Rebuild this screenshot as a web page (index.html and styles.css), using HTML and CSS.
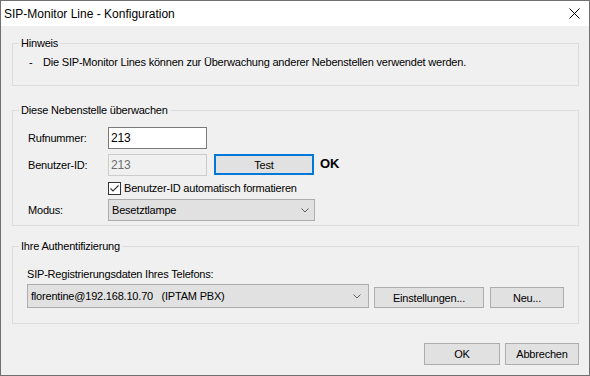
FILE: index.html
```html
<!DOCTYPE html>
<html lang="de">
<head>
<meta charset="utf-8">
<title>SIP-Monitor Line - Konfiguration</title>
<link rel="stylesheet" href="styles.css">
</head>
<body>
<div class="window">
  <div class="titlebar">
    <span class="title">SIP-Monitor Line - Konfiguration</span>
    <svg class="close" width="11" height="11" viewBox="0 0 11 11"><path d="M0.5 0.5 L10.5 10.5 M10.5 0.5 L0.5 10.5" stroke="#000" stroke-width="1" fill="none"/></svg>
  </div>
  <div class="body">
    <fieldset class="group g1">
      <legend>Hinweis</legend>
      <div class="note"><span class="dash">-</span><span>Die SIP-Monitor Lines können zur Überwachung anderer Nebenstellen verwendet werden.</span></div>
    </fieldset>

    <fieldset class="group g2">
      <legend>Diese Nebenstelle überwachen</legend>
      <div class="content">
        <div class="row">
          <span class="lbl">Rufnummer:</span>
          <div class="textbox">213</div>
        </div>
        <div class="row r2">
          <span class="lbl">Benutzer-ID:</span>
          <div class="textbox disabled">213</div>
          <div class="btn btn-test">Test</div>
          <span class="status">OK</span>
        </div>
        <div class="row r3">
          <span class="cb"><svg width="11" height="11" viewBox="0 0 11 11"><path d="M1.5 5.5 L4 8 L9.5 2.5" stroke="#333" stroke-width="1.1" fill="none"/></svg></span>
          <span class="cb-label">Benutzer-ID automatisch formatieren</span>
        </div>
        <div class="row r4">
          <span class="lbl">Modus:</span>
          <div class="combo combo-mode"><span>Besetztlampe</span><svg class="chev" width="8" height="5" viewBox="0 0 8 5"><path d="M0.5 0.5 L4 4 L7.5 0.5" stroke="#606060" stroke-width="1" fill="none"/></svg></div>
        </div>
      </div>
    </fieldset>

    <fieldset class="group g3">
      <legend>Ihre Authentifizierung</legend>
      <div class="content">
        <div class="sub">SIP-Registrierungsdaten Ihres Telefons:</div>
        <div class="row auth">
          <div class="combo combo-auth"><span>florentine@192.168.10.70&nbsp;&nbsp; (IPTAM PBX)</span><svg class="chev" width="8" height="5" viewBox="0 0 8 5"><path d="M0.5 0.5 L4 4 L7.5 0.5" stroke="#606060" stroke-width="1" fill="none"/></svg></div>
          <div class="btn btn-set">Einstellungen...</div>
          <div class="btn btn-new">Neu...</div>
        </div>
      </div>
    </fieldset>

    <div class="footer">
      <div class="btn btn-ok">OK</div>
      <div class="btn btn-cancel">Abbrechen</div>
    </div>
  </div>
</div>
</body>
</html>
```

FILE: styles.css
```css
* { box-sizing: border-box; }

body {
  margin: 0;
  font-family: "Liberation Sans", Arial, sans-serif;
  font-size: 11px;
  letter-spacing: -0.2px;
  color: #000;
  background: #fff;
}

.window {
  width: 590px;
  height: 376px;
  border: 1px solid #707070;
  background: #f0f0f0;
  display: flex;
  flex-direction: column;
}

.titlebar {
  height: 25px;
  flex: none;
  background: #fff;
  display: flex;
  align-items: center;
  justify-content: space-between;
  padding: 0 9px 0 3px;
}

.title {
  font-size: 12px;
  letter-spacing: 0;
  line-height: 16px;
}

.close { display: block; }

.body {
  flex: 1;
  padding: 9px 10px 11px 11px;
  display: flex;
  flex-direction: column;
}

.group {
  margin: 0;
  padding: 0;
  min-width: 0;
  border: 1px solid #dcdcdc;
}

.group legend {
  margin-left: 6px;
  padding: 0 2px;
  line-height: 16px;
}

.note {
  display: flex;
  line-height: 16px;
  padding: 3px 0 15px 16px;
}

.dash { width: 14px; flex: none; }

.g2 { margin-top: 16px; }
.g2 .content { padding: 9px 0 4px 15px; }

.g3 { margin-top: 12px; }
.g3 .content { padding: 12px 0 15px 14px; }

.row {
  display: flex;
  align-items: flex-start;
}

.r2 { margin-top: 5px; }
.r3 { margin-top: 5px; padding-left: 80px; align-items: center; }
.r4 { margin-top: 4px; }

.lbl {
  width: 80px;
  flex: none;
  line-height: 22px;
}

.textbox {
  width: 99px;
  height: 22px;
  border: 1px solid #7a7a7a;
  background: #fff;
  padding-left: 2px;
  line-height: 20px;
  font-size: 12px;
}

.textbox.disabled {
  border-color: #cccccc;
  background: #f0f0f0;
  color: #6d6d6d;
}

.btn {
  display: flex;
  align-items: center;
  justify-content: center;
  background: #e1e1e1;
  border: 1px solid #adadad;
  flex: none;
}

.btn-test {
  margin-left: 7px;
  width: 100px;
  height: 21px;
  border: 2px solid #0078d7;
}

.status {
  margin-left: 6px;
  font-weight: bold;
  font-size: 13px;
  letter-spacing: 0;
  line-height: 20px;
}

.cb {
  width: 13px;
  height: 13px;
  border: 1px solid #333;
  background: #fff;
  display: flex;
  align-items: center;
  justify-content: center;
}

.cb svg { display: block; }

.cb-label {
  margin-left: 3px;
  line-height: 14px;
}

.combo {
  height: 22px;
  background: #e1e1e1;
  border: 1px solid #adadad;
  display: flex;
  align-items: center;
  justify-content: space-between;
  padding: 0 5px 0 3px;
}

.combo-mode { width: 207px; }

.chev { display: block; }

.sub { line-height: 16px; }

.auth {
  margin-top: 2px;
  align-items: flex-end;
}

.combo-auth {
  width: 342px;
  height: 24px;
  padding-right: 7px;
}

.btn-set {
  margin-left: 5px;
  width: 110px;
  height: 21px;
}

.btn-new {
  margin-left: 6px;
  width: 74px;
  height: 21px;
}

.footer {
  margin-top: 19px;
  display: flex;
  justify-content: flex-end;
  gap: 5px;
}

.btn-ok, .btn-cancel {
  height: 22px;
}

.btn-ok { width: 76px; }
.btn-cancel { width: 74px; }
```
